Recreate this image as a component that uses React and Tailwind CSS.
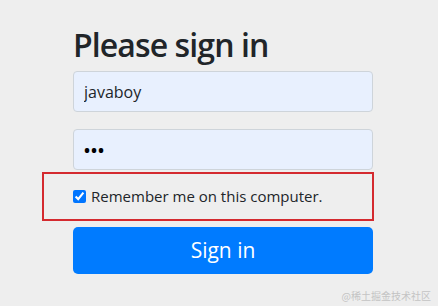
import React from 'react';

const App = () => {
  return (
    <div className="w-[438px] h-[306px] bg-[#eeeeee] relative overflow-hidden font-['Open_Sans',sans-serif]">
      <form className="ml-[73px] w-[300px] pt-[25px] flex flex-col">
        <h2 className="text-[32px] leading-[40px] font-semibold text-[#212529] mb-[6px] tracking-[-0.9px]">
          Please sign in
        </h2>
        <input
          type="text"
          defaultValue="javaboy"
          className="h-[41px] w-full rounded-[4px] border border-[#ced4da] bg-[#e8f0fe] px-[10px] text-[16px] text-[#212529] outline-none"
        />
        <input
          type="text"
          defaultValue="•••"
          className="mt-[17px] h-[41px] w-full rounded-[4px] border border-[#ced4da] bg-[#e8f0fe] px-[10px] text-[16px] font-bold text-black outline-none tracking-[1px]"
        />
        <div className="-ml-[31px] mt-[2px] h-[49px] w-[332px] border-2 border-[#d42a2f] flex items-center pl-[29px]">
          <label className="flex items-center gap-[5px] text-[15px] text-[#212529]">
            <input type="checkbox" defaultChecked className="w-[13px] h-[13px] accent-[#0075ff]" />
            Remember me on this computer.
          </label>
        </div>
        <button
          type="button"
          className="mt-[6px] h-[47px] w-full rounded-[5px] bg-[#007bff] text-white text-[21px]"
        >
          Sign in
        </button>
      </form>
      <div className="absolute right-[7px] bottom-[3px] text-[10px] text-[#c4c4c4] font-['Noto_Sans_CJK_SC',sans-serif]">
        @稀土掘金技术社区
      </div>
    </div>
  );
};

export default App;
